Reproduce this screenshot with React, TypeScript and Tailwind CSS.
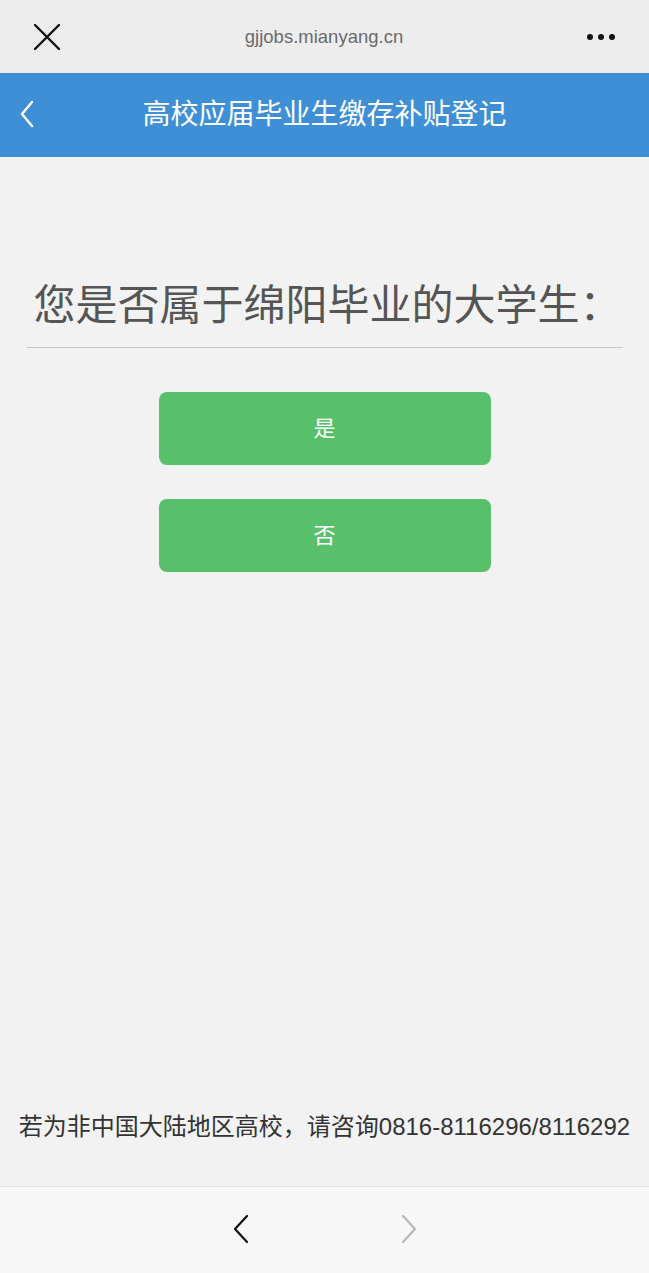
import React from "react";

export default function App() {
  const cjk = { fontFamily: '"Liberation Sans", "Noto Sans CJK SC", sans-serif' };
  return (
    <div className="flex h-[1273px] w-[649px] flex-col bg-[#f2f2f2]" style={cjk}>
      {/* browser top bar */}
      <div className="flex h-[73px] items-center justify-between bg-[#ededed] px-[34px]">
        <svg width="28" height="28" viewBox="0 0 28 28" className="ml-[-1px]">
          <path d="M2 2 L26 26 M26 2 L2 26" stroke="#111" strokeWidth="2.4" strokeLinecap="round" />
        </svg>
        <div className="text-[18.5px] text-[#6a6a6a]" style={{ fontFamily: '"Liberation Sans", sans-serif' }}>
          gjjobs.mianyang.cn
        </div>
        <div className="flex gap-[5px]">
          <span className="h-[6px] w-[6px] rounded-full bg-[#111]" />
          <span className="h-[6px] w-[6px] rounded-full bg-[#111]" />
          <span className="h-[6px] w-[6px] rounded-full bg-[#111]" />
        </div>
      </div>
      {/* blue header */}
      <div className="relative flex h-[84px] items-center justify-center bg-[#3f8fd6]">
        <svg width="16" height="28" viewBox="0 0 16 28" className="absolute left-[19px] top-[27px]">
          <path d="M13 2 L3 14 L13 26" stroke="#fff" strokeWidth="2.4" fill="none" strokeLinecap="round" strokeLinejoin="round" />
        </svg>
        <div className="text-[28px] text-white">高校应届毕业生缴存补贴登记</div>
      </div>
      {/* main */}
      <div className="flex flex-1 flex-col items-center">
        <div className="mt-[120px] w-[597px] whitespace-nowrap border-b border-[#c8c8c8] pb-[12px] pl-[6px] text-center text-[42px] leading-[58px] text-[#555]">
          您是否属于绵阳毕业的大学生：
        </div>
        <button className="mt-[44px] h-[73px] w-[332px] rounded-[8px] bg-[#58c06a] text-[22px] text-white">是</button>
        <button className="mt-[34px] h-[73px] w-[332px] rounded-[8px] bg-[#58c06a] text-[22px] text-white">否</button>
        <div className="flex-1" />
        <div className="pb-[43px] text-[24px] leading-[32px] text-[#333] whitespace-nowrap">
          若为非中国大陆地区高校，请咨询0816-8116296/8116292
        </div>
      </div>
      {/* bottom toolbar */}
      <div className="flex h-[87px] items-center justify-center gap-[152px] border-t border-[#e2e2e2] bg-[#f7f7f7] pb-[2px]">
        <svg width="16" height="30" viewBox="0 0 16 30">
          <path d="M14 2 L2 15 L14 28" stroke="#111" strokeWidth="2.2" fill="none" strokeLinecap="round" strokeLinejoin="round" />
        </svg>
        <svg width="16" height="30" viewBox="0 0 16 30">
          <path d="M2 2 L14 15 L2 28" stroke="#b8b8b8" strokeWidth="2.2" fill="none" strokeLinecap="round" strokeLinejoin="round" />
        </svg>
      </div>
    </div>
  );
}
